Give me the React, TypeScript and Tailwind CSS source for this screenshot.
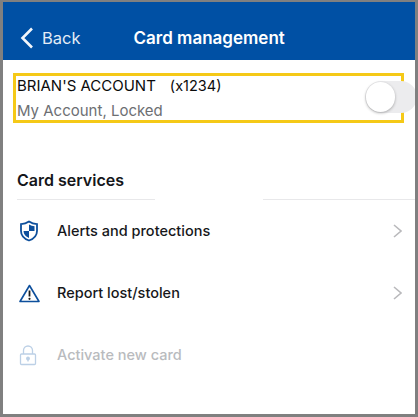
const font = { fontFamily: 'Inter, "Liberation Sans", sans-serif' };

function Chevron() {
  return (
    <svg width="9" height="14" viewBox="0 0 9 14" fill="none" stroke="#b9b9bc" strokeWidth="1.6" className="mr-[13px]">
      <path d="M1 1l7 6-7 6" />
    </svg>
  );
}

function ShieldIcon() {
  return (
    <svg width="20" height="22" viewBox="0 0 20 22">
      <path d="M10 1.500c2.500 1.700 5 2.500 8 2.700v6.800c0 4.600-3.200 7.800-8 9.500-4.800-1.700-8-4.900-8-9.500V4.200c3-.2 5.500-1 8-2.700z" fill="none" stroke="#0d4f9c" strokeWidth="1.800" />
      <path d="M10 4.500c1.800 1 3.600 1.500 5.500 1.800V11H10zM10 11v7c-3.200-1.300-5.500-3.600-5.500-7z" fill="#0d4f9c" />
    </svg>
  );
}

function WarningIcon() {
  return (
    <svg width="21" height="19" viewBox="0 0 21 19" fill="none">
      <path d="M10.500 1.500L1 17.500h19z" stroke="#0d4f9c" strokeWidth="1.600" strokeLinejoin="round" />
      <path d="M10.500 6.500v6" stroke="#1a1a1a" strokeWidth="1.800" />
      <circle cx="10.500" cy="14.800" r="1.100" fill="#1a1a1a" />
    </svg>
  );
}

function LockIcon() {
  return (
    <svg width="18" height="21" viewBox="0 0 18 21" fill="none" stroke="#bcd0e6" strokeWidth="1.300">
      <path d="M4.500 9V5.500a4.500 4.500 0 019 0V9" />
      <rect x="1.500" y="9" width="15" height="10.500" rx="1" />
      <circle cx="9" cy="13.500" r="1.300" fill="#bcd0e6" />
      <path d="M9 14v2.500" />
    </svg>
  );
}

function Row({ icon, label, muted, chevron }: { icon: React.ReactNode; label: string; muted?: boolean; chevron?: boolean }) {
  return (
    <div className="h-[62px] flex items-center">
      <div className="w-[54px] pl-[16px] flex items-center">{icon}</div>
      <div className={`flex-1 text-[14.500px] font-medium ${muted ? 'text-[#b9bbbe]' : 'text-[#16171a]'}`}>{label}</div>
      {chevron && <Chevron />}
    </div>
  );
}

export default function App() {
  return (
    <div className="w-[418px] h-[417px] bg-white border-t-2 border-b-[3px] border-l-[3px] border-r-[3px] border-[#808080] overflow-hidden" style={font}>
      {/* Top bar */}
      <header className="h-[58px] bg-[#0050a4] relative flex items-center pt-[14px] text-white">
        <svg width="14" height="22" viewBox="0 0 14 22" fill="none" stroke="#f2f6fb" strokeWidth="2.600" className="ml-[17px]">
          <path d="M12 1.500L2.500 11l9.500 9.500" />
        </svg>
        <span className="ml-[8px] text-[16.500px] text-[#e3ecf6]">Back</span>
        <span className="ml-[53px] mt-[1px] text-[17px] font-semibold">Card management</span>
      </header>

      {/* Account box */}
      <div className="relative mt-[13px] ml-[10px] w-[391px] h-[50px] border-[3px] border-[#f5c917] pl-[1px] leading-none">
        <div className="mt-[2px] flex text-[15px] text-[#0b0b0b]">
          <span>BRIAN&apos;S ACCOUNT</span>
          <span className="ml-[14px] text-[14.500px] leading-[16px]">(x1234)</span>
        </div>
        <div className="mt-[9px] text-[15px] text-[#6d6f73]">My Account, Locked</div>
        {/* Toggle */}
        <div className="absolute left-[349px] top-[5px] w-[52px] h-[32px] rounded-full bg-[#ececee]">
          <div className="w-[29px] h-[30px] mt-[1px] ml-[1px] rounded-full bg-white shadow-[0_1px_3px_rgba(0,0,0,0.3)]" />
        </div>
      </div>

      {/* Services */}
      <div className="mt-[45px] pl-[14px] text-[16px] font-semibold text-[#15161a] leading-[24px]">Card services</div>
      <div className="mt-[7px] ml-[14px] flex h-[1px]">
        <div className="w-[138px] bg-[#e8e8ea]" />
        <div className="ml-[108px] flex-1 bg-[#e8e8ea]" />
      </div>
      <div>
        <Row icon={<ShieldIcon />} label="Alerts and protections" chevron />
        <Row icon={<WarningIcon />} label="Report lost/stolen" chevron />
        <Row icon={<LockIcon />} label="Activate new card" muted />
      </div>
    </div>
  );
}
